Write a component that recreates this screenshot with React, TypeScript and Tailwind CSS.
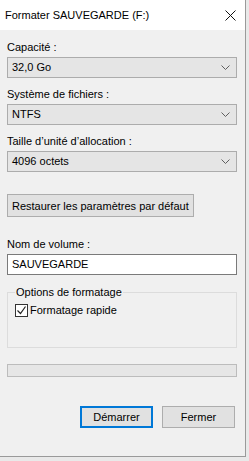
import React from 'react';

const font = { fontFamily: '"Liberation Sans", Arial, sans-serif' };

function Chevron() {
  return (
    <svg width="9" height="5" viewBox="0 0 9 5" className="shrink-0">
      <path d="M0.5 0.5 L4.5 4.5 L8.5 0.5" fill="none" stroke="#5f5f5f" strokeWidth="1" />
    </svg>
  );
}

function Select({ value }: { value: string }) {
  return (
    <div className="h-[21px] w-[230px] flex items-center justify-between bg-[#e5e5e5] border border-[#acacac] pl-[4px] pr-[6px]">
      <span>{value}</span>
      <Chevron />
    </div>
  );
}

function Label({ children, className = '' }: { children: React.ReactNode; className?: string }) {
  return <div className={`h-4 leading-4 ${className}`}>{children}</div>;
}

export default function App() {
  return (
    <div className="w-[249px] h-[461px] bg-[#e9e9e9] text-[11px] text-black" style={font}>
      <div className="w-[246px] h-[457px] flex flex-col bg-[#f0f0f0] border-r border-b border-[#9a9a9a]">
        {/* Title bar */}
        <div className="h-[30px] bg-white flex items-center justify-between pl-[5px] pr-[9px] shrink-0">
          <span className="text-[11px]">Formater SAUVEGARDE (F:)</span>
          <svg width="11" height="11" viewBox="0 0 11 11">
            <path d="M0.5 0.5 L10.5 10.5 M10.5 0.5 L0.5 10.5" stroke="#111" strokeWidth="1" />
          </svg>
        </div>

        <div className="flex flex-col pl-[7px] pt-[9px]">
          <Label>Capacité :</Label>
          <div className="mt-[2px]"><Select value="32,0 Go" /></div>

          <Label className="mt-[8px]">Système de fichiers :</Label>
          <div className="mt-[2px]"><Select value="NTFS" /></div>

          <Label className="mt-[8px]">Taille d’unité d’allocation :</Label>
          <div className="mt-[2px]"><Select value="4096 octets" /></div>

          <button className="mt-[22px] self-start h-[23px] px-[4px] bg-[#e1e1e1] border border-[#adadad] leading-4">
            Restaurer les paramètres par défaut
          </button>

          <Label className="mt-[19px]">Nom de volume :</Label>
          <div className="mt-[2px] h-[21px] w-[230px] flex items-center bg-white border border-[#7a7a7a] pl-[4px]">
            SAUVEGARDE
          </div>

          <fieldset className="mt-[9px] w-[230px] h-[64px] border border-[#dcdcdc] px-[7px]">
            <legend className="px-[1px] leading-4">Options de formatage</legend>
            <label className="flex items-center gap-[2px] mt-[2px]">
              <span className="w-[13px] h-[13px] bg-white border border-[#333] flex items-center justify-center">
                <svg width="11" height="11" viewBox="0 0 11 11">
                  <path d="M1.5 5.5 L4.5 8.5 L9.5 1.5" fill="none" stroke="#222" strokeWidth="1.2" />
                </svg>
              </span>
              <span>Formatage rapide</span>
            </label>
          </fieldset>

          <div className="mt-[16px] h-[13px] w-[230px] bg-[#e6e6e6] border border-[#bcbcbc]" />

          <div className="mt-[29px] w-[228px] flex justify-end gap-[9px]">
            <button className="h-[22px] w-[73px] bg-[#e1e1e1] border-2 border-[#0078d7]">Démarrer</button>
            <button className="h-[22px] w-[73px] bg-[#e1e1e1] border border-[#adadad]">Fermer</button>
          </div>
        </div>
      </div>
    </div>
  );
}
